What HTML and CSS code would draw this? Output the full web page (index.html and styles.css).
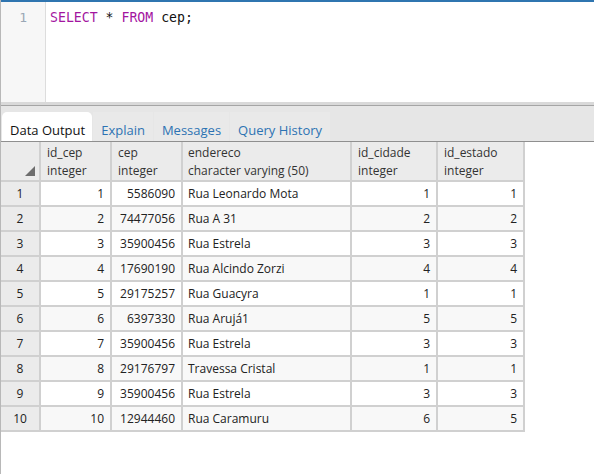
FILE: index.html
```html
<!DOCTYPE html>
<html>
<head>
<meta charset="utf-8">
<link rel="stylesheet" href="styles.css">
</head>
<body>
<div class="app">
  <div class="editor">
    <div class="gutter"><div class="lineno">1</div></div>
    <div class="code"><span class="kw">SELECT</span> * <span class="kw">FROM</span> cep;</div>
  </div>
  <div class="splitter"></div>
  <div class="tabs">
    <div class="tab active">Data Output</div>
    <div class="tab">Explain</div>
    <div class="tab">Messages</div>
    <div class="tab">Query History</div>
  </div>
  <div class="grid">
    <div class="row head">
      <div class="c rn corner"><span class="tri"></span></div>
      <div class="c w1">id_cep<br>integer</div>
      <div class="c w2">cep<br>integer</div>
      <div class="c w3">endereco<br>character varying (50)</div>
      <div class="c w4">id_cidade<br>integer</div>
      <div class="c w5">id_estado<br>integer</div>
    </div>
    <div class="row"><div class="c rn">1</div><div class="c w1 num">1</div><div class="c w2 num">5586090</div><div class="c w3">Rua Leonardo Mota</div><div class="c w4 num">1</div><div class="c w5 num">1</div></div>
    <div class="row even"><div class="c rn">2</div><div class="c w1 num">2</div><div class="c w2 num">74477056</div><div class="c w3">Rua A 31</div><div class="c w4 num">2</div><div class="c w5 num">2</div></div>
    <div class="row"><div class="c rn">3</div><div class="c w1 num">3</div><div class="c w2 num">35900456</div><div class="c w3">Rua Estrela</div><div class="c w4 num">3</div><div class="c w5 num">3</div></div>
    <div class="row even"><div class="c rn">4</div><div class="c w1 num">4</div><div class="c w2 num">17690190</div><div class="c w3">Rua Alcindo Zorzi</div><div class="c w4 num">4</div><div class="c w5 num">4</div></div>
    <div class="row"><div class="c rn">5</div><div class="c w1 num">5</div><div class="c w2 num">29175257</div><div class="c w3">Rua Guacyra</div><div class="c w4 num">1</div><div class="c w5 num">1</div></div>
    <div class="row even"><div class="c rn">6</div><div class="c w1 num">6</div><div class="c w2 num">6397330</div><div class="c w3">Rua Arujá1</div><div class="c w4 num">5</div><div class="c w5 num">5</div></div>
    <div class="row"><div class="c rn">7</div><div class="c w1 num">7</div><div class="c w2 num">35900456</div><div class="c w3">Rua Estrela</div><div class="c w4 num">3</div><div class="c w5 num">3</div></div>
    <div class="row even"><div class="c rn">8</div><div class="c w1 num">8</div><div class="c w2 num">29176797</div><div class="c w3">Travessa Cristal</div><div class="c w4 num">1</div><div class="c w5 num">1</div></div>
    <div class="row"><div class="c rn">9</div><div class="c w1 num">9</div><div class="c w2 num">35900456</div><div class="c w3">Rua Estrela</div><div class="c w4 num">3</div><div class="c w5 num">3</div></div>
    <div class="row even"><div class="c rn">10</div><div class="c w1 num">10</div><div class="c w2 num">12944460</div><div class="c w3">Rua Caramuru</div><div class="c w4 num">6</div><div class="c w5 num">5</div></div>
  </div>
</div>
</body>
</html>
```
FILE: styles.css
```css
* { box-sizing: border-box; }
html, body { margin: 0; padding: 0; background: #fff; }
body { width: 594px; height: 474px; overflow: hidden; font-family: "Open Sans", sans-serif; color: #222; }
.app { display: flex; flex-direction: column; height: 474px; border-left: 1px solid #b8b8b8; }

.editor { height: 102px; border-top: 2px solid #2f75b0; display: flex; background: #fff; }
.gutter { width: 45px; background: #f7f7f7; border-right: 1px solid #dddddd; }
.lineno { font-family: "DejaVu Sans Mono", monospace; font-size: 13px; color: #9aa7b5; text-align: right; padding-right: 18px; line-height: 16px; padding-top: 8px; }
.code { font-family: "DejaVu Sans Mono", monospace; font-size: 13.2px; line-height: 16px; padding-top: 8px; padding-left: 4px; color: #111; }
.kw { color: #a3159f; }

.splitter { height: 4px; background: #d9d9d9; border-bottom: 1px solid #a5a5a5; }

.tabs { height: 36px; background: #e6e6e6; border-bottom: 1px solid #8f8f8f; display: flex; align-items: flex-end; padding-left: 1px; }
.tab { height: 29px; padding: 4px 8px 0 8px; font-size: 13px; line-height: 29px; color: #2d73b3; background: #e9e9e9; margin-right: 1px; }
.tab.active { background: #fff; color: #111; border-radius: 5px 5px 0 0; padding: 4px 7px 0 8px; }

.grid { flex: 1; display: flex; flex-direction: column; font-size: 12px; }
.row { display: flex; height: 25px; }
.row .c { border-right: 2px solid #d0d0d0; border-bottom: 2px solid #d0d0d0; padding: 0 6px; line-height: 23px; white-space: nowrap; overflow: hidden; }
.row.even .c { background: #f8f8f8; }
.row .c.rn { width: 40px; background: #ebebeb; text-align: center; padding: 0; }
.w1 { width: 71px; }
.w2 { width: 71px; }
.w3 { width: 169px; }
.w4 { width: 86px; }
.w5 { width: 87px; }
.num { text-align: right; }
.row.head { height: 40px; }
.row.head .c { background: #ebebeb; line-height: 18px; padding-top: 2px; color: #333; }
.w3 { padding-left: 5px !important; }
.corner { position: relative; }
.tri { position: absolute; right: 4px; bottom: 4px; width: 0; height: 0; border-left: 10px solid transparent; border-bottom: 10px solid #6d6d6d; }
```
